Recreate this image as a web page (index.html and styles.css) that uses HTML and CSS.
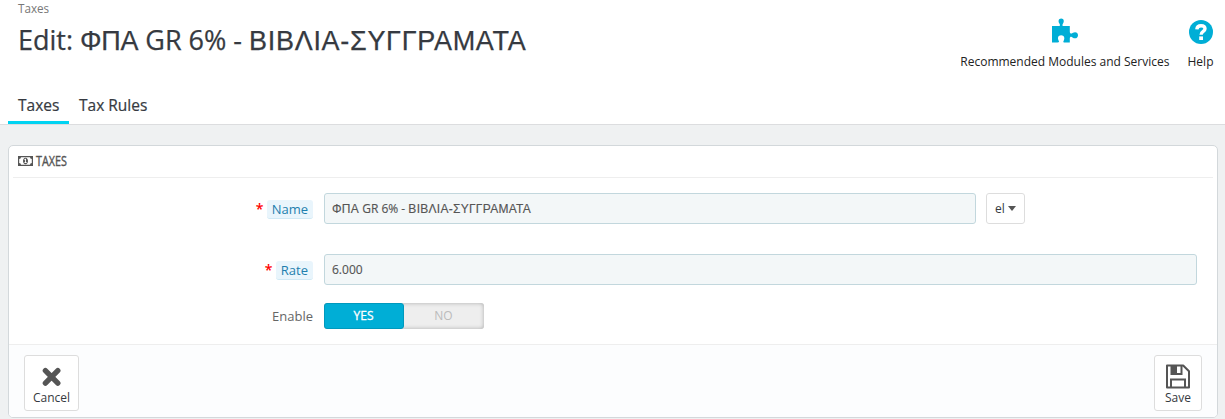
FILE: index.html
```html
<!DOCTYPE html>
<html lang="en">
<head>
<meta charset="utf-8">
<title>Taxes</title>
<link rel="stylesheet" href="styles.css">
</head>
<body>
<header class="page-head">
  <div class="head-row">
    <div class="titles">
      <div class="breadcrumb">Taxes</div>
      <h1 class="title">Edit: <span class="gr gr-short">ΦΠΑ</span> GR 6% - <span class="gr">ΒΙΒΛΙΑ-ΣΥΓΓΡΑΜΑΤΑ</span></h1>
    </div>
    <div class="toolbar">
      <a class="tool">
        <svg class="tool-icon" width="28" height="28" viewBox="0 0 28 28"><path d="M1 8H8.2C9.3 8 9.2 6.8 8.4 5.6C7 3.4 7.4 .4 10.2 .4S13.4 3.4 12 5.6C11.2 6.8 11.1 8 12.2 8H18.8V13.6C18.8 15.7 20.2 16.1 21.5 15.1C24 13.2 27 14.2 27 17.2S24 21.2 21.5 19.4C20.2 18.4 18.8 18.8 18.8 20.7V24.5H14.2C11.9 24.5 12 23.8 12.8 22.4C14 20.3 13.3 17.2 10.1 17.2S6.4 20.3 7.6 22.4C8.4 23.8 8.2 24.3 6.5 24.4L1 24.5Z"/></svg>
        <span>Recommended Modules and Services</span>
      </a>
      <a class="tool">
        <svg class="tool-icon" width="28" height="28" viewBox="0 0 28 28"><circle cx="14" cy="14" r="12"/><path d="M9.8 11.4C10.1 8.9 11.6 7.8 14 7.8C16.4 7.8 18 9 18 10.8C18 13.6 14.1 13.2 14.1 16.8" fill="none" stroke="#fff" stroke-width="3.4"/><path d="M12.2 18.4H16V22H12.2Z" fill="#fff"/></svg>
        <span>Help</span>
      </a>
    </div>
  </div>
  <nav class="tabs"><a class="tab active">Taxes</a><a class="tab">Tax Rules</a></nav>
</header>
<main class="panel">
  <div class="panel-heading">
    <svg width="15" height="10" viewBox="0 0 15 10"><path fill-rule="evenodd" d="M0 0H15V10H0ZM3 1.2A1.8 1.8 0 0 1 1.2 3V7A1.8 1.8 0 0 1 3 8.8H12A1.8 1.8 0 0 1 13.8 7V3A1.8 1.8 0 0 1 12 1.2ZM7.5 1.8C9 1.8 10 3.2 10 5S9 8.2 7.5 8.2S5 6.8 5 5S6 1.8 7.5 1.8ZM6.3 3.5L7.1 2.8H8V6.2H8.8V7H6.3V6.2H7.1V4L6.5 4.2Z"/></svg>
    <span class="heading-text">TAXES</span>
  </div>
  <form class="form">
    <div class="row row-name">
      <label class="label"><b class="star">*</b><span class="hint">Name</span></label>
      <div class="input name-input"><span class="gr">ΦΠΑ</span> GR 6% - <span class="gr">ΒΙΒΛΙΑ-ΣΥΓΓΡΑΜΑΤΑ</span></div>
      <button type="button" class="lang">el<i class="caret"></i></button>
    </div>
    <div class="row row-rate">
      <label class="label"><b class="star">*</b><span class="hint">Rate</span></label>
      <div class="input">6.000</div>
    </div>
    <div class="row row-enable">
      <label class="label">Enable</label>
      <div class="switch"><span class="on">YES</span><span class="off">NO</span></div>
    </div>
  </form>
  <footer class="panel-footer">
    <button type="button" class="action cancel">
      <svg width="28" height="28" viewBox="0 0 28 28"><path d="M7.4 7.7L19.8 20.1M19.8 7.7L7.4 20.1" stroke="#555" stroke-width="5.4" stroke-linecap="round"/></svg>
      <span>Cancel</span>
    </button>
    <button type="button" class="action save">
      <svg width="28" height="28" viewBox="0 0 28 28" fill="none" stroke="#555" stroke-width="2"><path d="M3 2.5H19.2L25 8.3V24.5H3Z" stroke-linejoin="round"/><path d="M7 24.5V16.5H21V24.5M7.5 2.5V11H17.5V2.5"/><path d="M7 2.5H13V11.5H7Z" fill="#555" stroke="none"/></svg>
      <span>Save</span>
    </button>
  </footer>
</main>
</body>
</html>
```
FILE: styles.css
```css
* { box-sizing: border-box; }
body {
  margin: 0;
  height: 419px;
  overflow: hidden;
  background: #eff1f2;
  font-family: "Open Sans", "Liberation Sans", sans-serif;
  font-size: 12px;
  color: #363a41;
}
.page-head {
  height: 125px;
  background: #fff;
  border-bottom: 1px solid #dcdddf;
  display: flex;
  flex-direction: column;
  justify-content: space-between;
}
.head-row { display: flex; justify-content: space-between; padding: 0 10.5px 0 18px; }
.breadcrumb { line-height: 16px; font-size: 11.7px; color: #777; }
.title { margin: 6px 0 0; font-size: 27px; line-height: 36px; font-weight: 400; white-space: nowrap; -webkit-text-stroke: .25px #363a41; }
.gr { font-family: "Liberation Sans", sans-serif; letter-spacing: .28px; }
.title .gr { letter-spacing: .7px; }
.title .gr-short { letter-spacing: -.3px; }
.toolbar { display: flex; gap: 17px; padding-top: 18px; }
.tool { display: flex; flex-direction: column; align-items: center; line-height: 16px; gap: 8px; color: #222; }
.tool-icon { fill: #00aed6; }
.tabs { display: flex; padding-left: 8px; }
.tab { height: 39px; padding: 0 10px; line-height: 40px; font-size: 15.5px; -webkit-text-stroke: .2px #363a41; border-bottom: 3px solid transparent; }
.tab.active { width: 61px; border-color: #00d3f2; }
.panel {
  margin: 20px 7px 0 8px;
  height: 273px;
  background: #fff;
  border: 1px solid #d3d8db;
  border-radius: 5px;
  display: flex;
  flex-direction: column;
  overflow: hidden;
}
.panel-heading {
  height: 32px;
  margin: 0 4px;
  padding: 0 0 2px 5px;
  border-bottom: 1px solid #eee;
  display: flex;
  align-items: center;
  gap: 3px;
  color: #555;
  fill: #555;
}
.heading-text { width: 33px; font-size: 14px; line-height: 20px; -webkit-text-stroke: .4px #555; transform: scaleX(.77); transform-origin: 0 50%; }
.form { flex: 1; padding: 15px 20px 0 0; }
.row { display: flex; align-items: center; }
.row-name { margin-bottom: 30px; }
.row-rate { margin-bottom: 18px; }
.label { width: 304px; margin-right: 11px; display: flex; justify-content: flex-end; align-items: center; font-size: 13px; color: #666; }
.star { width: 7px; margin-right: 4px; color: #f00; font-size: 14px; font-weight: 600; line-height: 18px; }
.hint { margin-top: 1px; padding: 0 5px; height: 19px; line-height: 19px; color: #1e7fae; background: #e9f5fc; border-bottom: 1px solid #d0e9f5; border-radius: 3px; }
.input { flex: 1; height: 31px; padding: 0 7px; line-height: 29px; color: #555; -webkit-text-stroke: .15px #555; background: #f3f7f8; border: 1px solid #c2d7dd; border-radius: 3px; white-space: nowrap; }
.name-input { flex: 0 0 652px; }
.lang { width: 39px; height: 31px; margin-left: 10px; padding: 0; border: 1px solid #ddd; border-radius: 3px; background: #fff; font: inherit; color: #363a41; display: flex; align-items: center; justify-content: center; gap: 3px; }
.caret { border: 4px solid transparent; border-top: 5px solid #555; border-bottom: 0; }
.switch { width: 160px; height: 26px; display: flex; background: #eee; border-radius: 3px; box-shadow: inset 0 0 4px #aaa; text-align: center; line-height: 25px; }
.on { width: 80px; padding-right: 1px; color: #fff; background: #00aed6; border: 1px solid #0099bd; border-radius: 3px; line-height: 23px; -webkit-text-stroke: .3px #fff; }
.off { width: 80px; padding-right: 1px; color: #bbb; }
.panel-footer { height: 73px; padding: 10px 15px 0; border-top: 1px solid #eee; background: #fcfdfe; display: flex; justify-content: space-between; }
.action { height: 56px; padding: 7px 0 0; border: 1px solid #ddd; border-radius: 3px; background: #fff; font: inherit; line-height: 13px; color: #363a41; display: flex; flex-direction: column; align-items: center; }
.cancel { width: 55px; }
.save { width: 48px; }
```
